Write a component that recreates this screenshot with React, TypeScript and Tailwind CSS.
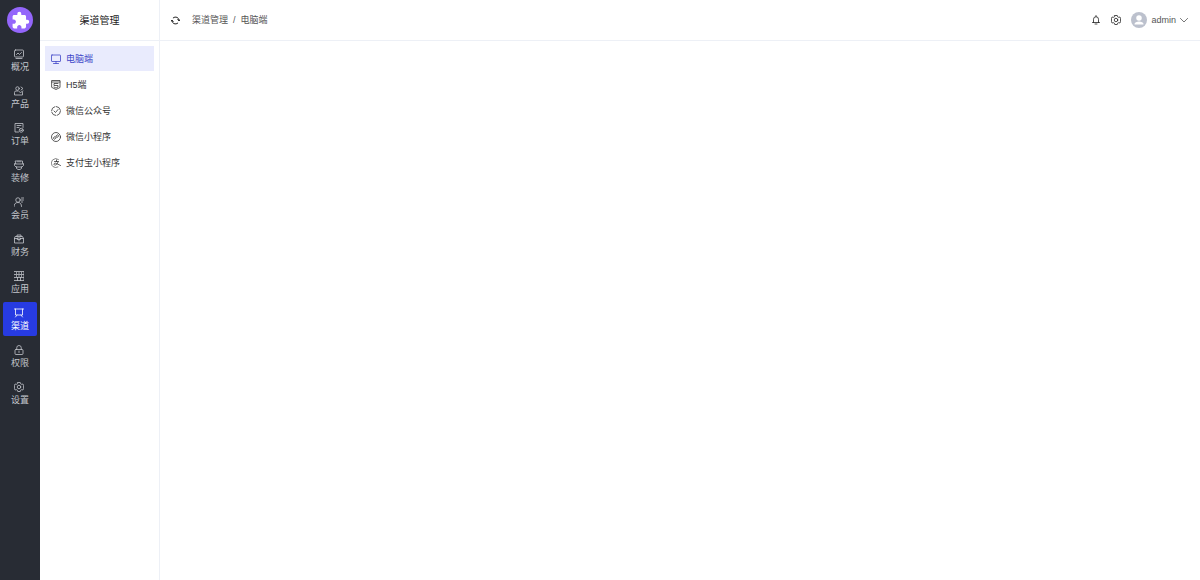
import { useState } from "react";
import type { ReactNode } from "react";
import clsx from "clsx";
import { MdExtension } from "react-icons/md";

interface IconProps {
  children: ReactNode;
  className?: string;
}

function Icon({ children, className = "size-2.5" }: IconProps) {
  return (
    <svg
      viewBox="0 0 20 20"
      className={clsx("shrink-0", className)}
      fill="none"
      stroke="currentColor"
      strokeWidth="1.6"
      strokeLinecap="round"
      strokeLinejoin="round"
      aria-hidden="true"
    >
      {children}
    </svg>
  );
}

const gear = (
  <>
    <path d="M7.5 1h5l.8 2.6 1.700 1 2.700-.6 2.300 4-1.800 2 1.800 2-2.300 4-2.700-.6-1.700 1-.8 2.600h-5l-.8-2.600-1.700-1-2.700.6L0 12l1.800-2L0 8l2.300-4 2.700.6 1.700-1z" />
    <circle cx="10" cy="10" r="3.5" />
  </>
);

const mainItems = [
  {
    label: "概况",
    icon: (
      <>
        <rect x="1" y="2" width="18" height="14" rx="2" />
        <path d="M5 11l3-3 3 3 4-4M4 19h12" />
      </>
    ),
  },
  {
    label: "产品",
    icon: (
      <>
        <circle cx="7" cy="5" r="3.5" />
        <path d="M8 10H4a3 3 0 0 0-3 3v5h16v-5M14 2l4 3-4 3M10 11l3 2 5-3" />
      </>
    ),
  },
  {
    label: "订单",
    icon: (
      <>
        <path d="M18 9V1H2v17h7M6 5h8M6 9h4" />
        <circle cx="14.5" cy="14.5" r="4" />
        <path d="M13 14l1.5 2 2-3" />
      </>
    ),
  },
  {
    label: "装修",
    icon: <path d="M3 2h14v5h2v4l-3 3H4l-3-3V7h2zM3 8h14M5 14v3l3 2h4l3-2v-3M8 2v2M12 2v2" />,
  },
  {
    label: "会员",
    icon: (
      <>
        <circle cx="8" cy="6" r="4.5" />
        <path d="M0 19c0-5 3-8 8-8s7 3 7 8M15 2h5M15 6h4M15 10h2" />
      </>
    ),
  },
  {
    label: "财务",
    icon: <path d="M6 5V2h8v3M3 5h14l2 4v9H1V9zM1 9h6M13 9h6M7 8h6v3H7zM10 11v3" />,
  },
  {
    label: "应用",
    icon: <path d="M0 1h20v18H0zM0 7h20M0 13h20M5 3v2M10 3v2M15 3v2M5 9v2M10 9v2M15 9v2M7 13v6M13 13v6" />,
  },
  {
    label: "渠道",
    icon: <path d="M0 2h20M3 2v12h14V2M6 14l-3 4M14 14l3 4" />,
  },
  {
    label: "权限",
    icon: (
      <>
        <rect x="2" y="9" width="16" height="10" rx="2" />
        <path d="M5.5 9V5.5a4.5 4.5 0 0 1 9 0V9M10 12v3" />
      </>
    ),
  },
  { label: "设置", icon: gear },
];

const subItems = [
  {
    label: "电脑端",
    icon: (
      <>
        <rect x="1" y="2" width="18" height="13" rx="1" />
        <path d="M10 15v4M5 19h10" />
      </>
    ),
  },
  {
    label: "H5端",
    icon: <path d="M2 1h16v14l-8 4-8-4zM2 4h16M14 7H6v4h8v3l-4 2-4-2" />,
  },
  {
    label: "微信公众号",
    icon: (
      <>
        <circle cx="10" cy="10" r="9" strokeDasharray="11 3" />
        <path d="M6 10l3 3 5-6" />
      </>
    ),
  },
  {
    label: "微信小程序",
    icon: (
      <>
        <circle cx="10" cy="10" r="9" />
        <path d="M8 9c-5 1-3 7 0 5 3-1 1-7 4-8 3-2 5 4 0 5" />
      </>
    ),
  },
  {
    label: "支付宝小程序",
    icon: (
      <>
        <path d="M15 3A9 9 0 1 0 14 18" strokeDasharray="12 2" strokeWidth="1.2" />
        <path d="M7 7h8M11 4v3M14 8c-1 4-4 7-7 6-3-2 1-5 4-3l8 4" />
      </>
    ),
  },
];

function MainRail({ active, onSelect }: { active: string; onSelect: (label: string) => void }) {
  return (
    <aside className="w-10 shrink-0 bg-[#282c34] px-[3px] pt-[7px]">
      <a
        href="#home"
        aria-label="首页"
        className="mx-auto flex size-[26px] items-center justify-center rounded-full bg-[#9466fb] text-white"
      >
        <MdExtension className="size-[19px]" />
      </a>
      <nav className="mt-[10px] flex flex-col gap-[3px]">
        {mainItems.map((item) => (
          <a
            key={item.label}
            href="#main"
            onClick={() => onSelect(item.label)}
            className={clsx(
              "flex h-[34px] flex-col items-center justify-center gap-0.5 rounded-xs pt-0.5 text-[9px] leading-3",
              active === item.label ? "bg-[#273be2] text-white" : "text-[#c4c7cd]",
            )}
          >
            <span className="pr-0.5">
              <Icon>{item.icon}</Icon>
            </span>
            {item.label}
          </a>
        ))}
      </nav>
    </aside>
  );
}

function SubMenu({ active, onSelect }: { active: string; onSelect: (label: string) => void }) {
  return (
    <aside className="w-[120px] shrink-0 border-r border-[#edf0f6]">
      <h1 className="flex h-[41px] items-center justify-center border-b border-[#edf0f6] text-[10px] text-[#222]">
        渠道管理
      </h1>
      <nav className="flex flex-col gap-px px-[5px] pt-[5px]">
        {subItems.map((item) => (
          <a
            key={item.label}
            href="#sub"
            onClick={() => onSelect(item.label)}
            className={clsx(
              "flex h-[25px] items-center gap-[5px] px-[6px] text-[9px]",
              active === item.label ? "bg-[#e9ebfd] text-[#4046c8]" : "text-[#333]",
            )}
          >
            <Icon>{item.icon}</Icon>
            <span className="pt-0.5">{item.label}</span>
          </a>
        ))}
      </nav>
    </aside>
  );
}

function TopBar({ current }: { current: string }) {
  return (
    <header className="flex h-[41px] items-center justify-between border-b border-[#edf0f6] pr-3 pl-[11px] text-[9px] text-[#555]">
      <div className="flex items-center gap-3">
        <button type="button" aria-label="刷新" className="text-[#222]">
          <Icon className="size-[9px]">
            <path
              strokeWidth="2.2"
              d="M5 4a8 8 0 0 1 13 6M15 8l3 3 2-3M15 16a8 8 0 0 1-13-6M5 12L2 9l-2 3"
            />
          </Icon>
        </button>
        <nav aria-label="面包屑" className="flex items-center gap-[5px] pt-0.5">
          <a href="#channel">渠道管理</a>
          <span>/</span>
          <span>{current}</span>
        </nav>
      </div>
      <div className="flex items-center gap-[10px]">
        <button type="button" aria-label="通知" className="text-[#222]">
          <Icon>
            <path d="M3 15h14M5 15V8.500a5 5 0 0 1 10 0V15M10 1v2M8 18h4" />
          </Icon>
        </button>
        <button type="button" aria-label="设置" className="text-[#222]">
          <Icon>{gear}</Icon>
        </button>
        <button type="button" className="flex items-center gap-1">
          <svg viewBox="0 0 32 32" className="size-4" aria-hidden="true">
            <circle cx="16" cy="16" r="16" fill="#bcc1cd" />
            <circle cx="16" cy="12" r="5.5" fill="#fff" />
            <path d="M7 24c0-7 18-7 18 0v1H7z" fill="#fff" />
          </svg>
          <span className="pt-0.5">admin</span>
          <Icon className="size-2">
            <path d="M1 6l9 9 9-9" strokeWidth="2" />
          </Icon>
        </button>
      </div>
    </header>
  );
}

export default function App() {
  const [mainActive, setMainActive] = useState("渠道");
  const [subActive, setSubActive] = useState("电脑端");

  return (
    <div className="flex min-h-screen bg-white font-['Liberation_Sans','Noto_Sans_CJK_SC',sans-serif]">
      <MainRail active={mainActive} onSelect={setMainActive} />
      <SubMenu active={subActive} onSelect={setSubActive} />
      <div className="flex min-w-0 flex-1 flex-col">
        <TopBar current={subActive} />
        <main className="flex-1" />
      </div>
    </div>
  );
}
